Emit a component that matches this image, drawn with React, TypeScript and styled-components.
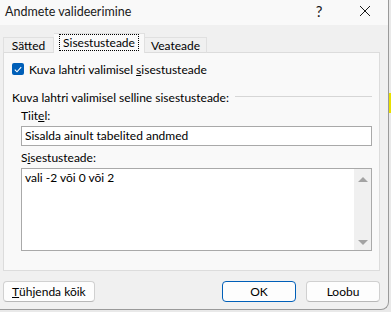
import React from 'react';
import styled, { createGlobalStyle } from 'styled-components';

const GlobalStyle = createGlobalStyle`
  html, body {
    margin: 0;
    padding: 0;
    background: #e9e9e9;
  }
  body {
    font-family: "Segoe UI", Lato, "Noto Sans", sans-serif;
    font-size: 12px;
    color: #000;
  }
`;

function App() {
  return (
    <Page>
      <GlobalStyle />
      <Dialog>
        <TitleBar>
          <Title>Andmete valideerimine</Title>
          <TitleButtons>
            <TitleButton>?</TitleButton>
            <TitleButton>
              <svg width="12" height="12" viewBox="0 0 12 12">
                <path d="M1 1 L11 11 M11 1 L1 11" stroke="#1a1a1a" strokeWidth="1" fill="none" />
              </svg>
            </TitleButton>
          </TitleButtons>
        </TitleBar>

        <Body>
          <Tabs>
            <Tab width={51}>Sätted</Tab>
            <Tab width={91} active>
              <Focus>Sisestusteade</Focus>
            </Tab>
            <Tab width={62}>Veateade</Tab>
          </Tabs>

          <Panel>
            <CheckRow>
              <CheckBox>
                <svg width="8" height="7" viewBox="0 0 8 7">
                  <path d="M0.8 3.6 L3 5.8 L7.2 1.2" stroke="#fff" strokeWidth="1.1" fill="none" />
                </svg>
              </CheckBox>
              <span>
                Kuva lahtri valimisel <u>s</u>isestusteade
              </span>
            </CheckRow>

            <GroupHeader>
              <span>Kuva lahtri valimisel selline sisestusteade:</span>
              <GroupLine />
            </GroupHeader>

            <Fields>
              <Label>
                Tiit<u>e</u>l:
              </Label>
              <TextBox>Sisalda ainult tabelited andmed</TextBox>
              <Label spaced>
                S<u>i</u>sestusteade:
              </Label>
              <TextArea>
                <AreaText>vali -2 või 0 või 2</AreaText>
                <ScrollBar>
                  <Arrow up />
                  <Arrow />
                </ScrollBar>
              </TextArea>
            </Fields>
          </Panel>

          <Footer>
            <Button>
              <u>T</u>ühjenda kõik
            </Button>
            <FooterRight>
              <Button primary wide>OK</Button>
              <Button wide>Loobu</Button>
            </FooterRight>
          </Footer>
        </Body>
      </Dialog>
      <Marker />
    </Page>
  );
}

export default App;

const Page = styled.div`
  position: relative;
  width: 391px;
  height: 312px;
  overflow: hidden;
`;

const Marker = styled.div`
  position: absolute;
  left: 389px;
  top: 93px;
  width: 2px;
  height: 20px;
  background: #e8e000;
`;

const Dialog = styled.div`
  width: 388px;
  height: 309px;
  background: #f0f0f0;
  border-right: 1px solid #9a9a9a;
  border-bottom: 1px solid #9a9a9a;
  border-bottom-right-radius: 8px;
  display: flex;
  flex-direction: column;
  overflow: hidden;
`;

const TitleBar = styled.div`
  height: 25px;
  background: #f9f9f9;
  display: flex;
  align-items: center;
  justify-content: space-between;
  padding-left: 5px;
`;

const Title = styled.span`
  font-size: 12.5px;
  color: #1a1a1a;
  margin-top: -3px;
`;

const TitleButtons = styled.div`
  display: flex;
  align-items: center;
  margin-top: -3px;
`;

const TitleButton = styled.div`
  width: 46px;
  height: 22px;
  display: flex;
  align-items: center;
  justify-content: center;
  font-size: 15px;
  color: #1a1a1a;
`;

const Body = styled.div`
  flex: 1;
  display: flex;
  flex-direction: column;
  padding: 8px 8px 0 3px;
`;

const Tabs = styled.div`
  display: flex;
  align-items: flex-end;
  height: 20px;
  position: relative;
  z-index: 1;
  margin-bottom: -1px;
`;

const Tab = styled.div<{ active?: boolean; width: number }>`
  width: ${(p) => p.width}px;
  height: ${(p) => (p.active ? '20px' : '16px')};
  box-sizing: border-box;
  display: flex;
  align-items: center;
  justify-content: center;
  padding-bottom: ${(p) => (p.active ? '2px' : '0')};
  background: ${(p) => (p.active ? '#f9f9f9' : '#f0f0f0')};
  border: 1px solid #e0e0e0;
  border-bottom: ${(p) => (p.active ? 'none' : '1px solid #dcdcdc')};
  & + & {
    border-left: none;
  }
`;

const Focus = styled.span`
  outline: 1px dotted #000;
  outline-offset: 0;
  padding: 0 3px;
  line-height: 15px;
`;

const Panel = styled.div`
  height: 219px;
  box-sizing: border-box;
  background: #f9f9f9;
  border: 1px solid #dcdcdc;
  padding: 9px 7px 0 8px;
  display: flex;
  flex-direction: column;
`;

const CheckRow = styled.div`
  display: flex;
  align-items: center;
  gap: 5px;
  height: 14px;
`;

const CheckBox = styled.div`
  width: 12px;
  height: 12px;
  border-radius: 2px;
  background: #005fb8;
  display: flex;
  align-items: center;
  justify-content: center;
`;

const GroupHeader = styled.div`
  display: flex;
  align-items: center;
  margin-top: 13px;
  height: 16px;
`;

const GroupLine = styled.div`
  flex: 1;
  height: 1px;
  background: #d6d6d6;
  margin-left: 6px;
  margin-top: -1px;
`;

const Fields = styled.div`
  display: flex;
  flex-direction: column;
  padding-left: 9px;
  margin-top: 3px;
`;

const Label = styled.div<{ spaced?: boolean }>`
  height: 16px;
  line-height: 16px;
  margin-top: ${(p) => (p.spaced ? '4px' : '0')};
  margin-bottom: 2px;
`;

const TextBox = styled.div`
  height: 20px;
  box-sizing: border-box;
  background: #fff;
  border: 1px solid #a9a9a9;
  padding: 0 3px;
  line-height: 18px;
`;

const TextArea = styled.div`
  height: 83px;
  box-sizing: border-box;
  background: #fff;
  border: 1px solid #a9a9a9;
  display: flex;
`;

const AreaText = styled.div`
  flex: 1;
  padding: 1px 3px;
  line-height: 16px;
`;

const ScrollBar = styled.div`
  width: 17px;
  background: #f0f0f0;
  display: flex;
  flex-direction: column;
  justify-content: space-between;
  align-items: center;
  padding: 8px 0 5px;
`;

const Arrow = styled.div<{ up?: boolean }>`
  width: 0;
  height: 0;
  border-left: 5px solid transparent;
  border-right: 5px solid transparent;
  ${(p) => (p.up ? 'border-bottom: 5px solid #a3a3a3;' : 'border-top: 5px solid #a3a3a3;')}
`;

const Footer = styled.div`
  display: flex;
  justify-content: space-between;
  margin-top: 10px;
  margin-right: -8px;
`;

const FooterRight = styled.div`
  display: flex;
  gap: 10px;
  margin-right: 8px;
`;

const Button = styled.div<{ primary?: boolean; wide?: boolean }>`
  height: 21px;
  box-sizing: border-box;
  min-width: ${(p) => (p.wide ? '74px' : '0')};
  padding: 0 8px;
  display: flex;
  align-items: center;
  justify-content: center;
  background: #fdfdfd;
  border: 1px solid ${(p) => (p.primary ? '#005fb8' : '#d0d0d0')};
  border-bottom-color: ${(p) => (p.primary ? '#005fb8' : '#b8b8b8')};
  border-radius: 4px;
`;
